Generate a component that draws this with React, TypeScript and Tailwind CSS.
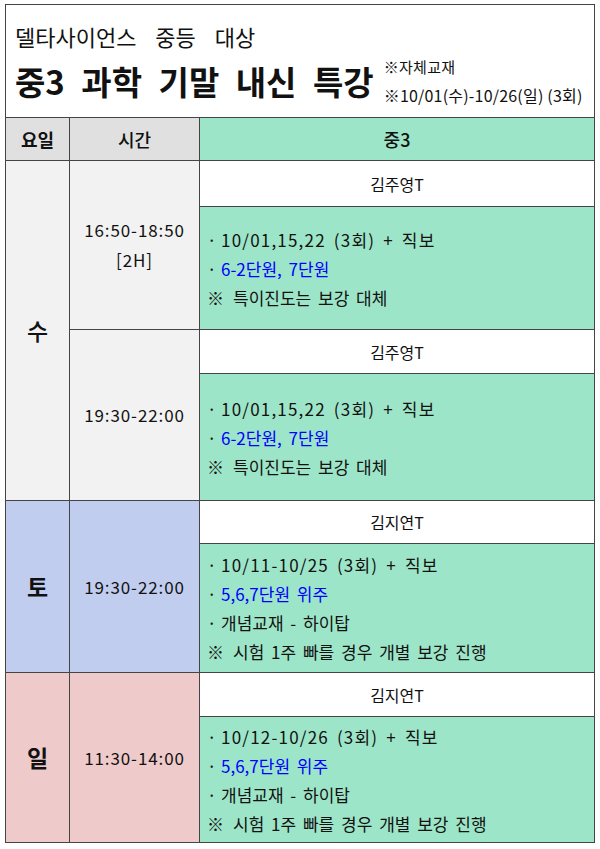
import React from "react";

// ─────────────────────────────────────────────
// Data
// ─────────────────────────────────────────────

type Line = { mark: string; text: string; blue?: boolean; wide?: boolean };

interface Slot {
  teacher:   string;
  time:      string[];
  lines:     Line[];
  headH:     string;
  bodyH:     string;
}

interface Day {
  label: string;
  bg:    string;
  slots: Slot[];
}

const wedLines: Line[] = [
  { mark: "·", text: "10/01,15,22 (3회) + 직보", wide: true },
  { mark: "·", text: "6-2단원, 7단원", blue: true },
  { mark: "※", text: "특이진도는 보강 대체" },
];

const days: Day[] = [
  {
    label: "수",
    bg:    "bg-[#f2f2f2]",
    slots: [
      {
        teacher: "김주영T",
        time:    ["16:50-18:50", "[2H]"],
        headH:   "h-[46px]",
        bodyH:   "h-[123px]",
        lines:   wedLines,
      },
      {
        teacher: "김주영T",
        time:    ["19:30-22:00"],
        headH:   "h-[44px]",
        bodyH:   "h-[127px]",
        lines:   wedLines,
      },
    ],
  },
  {
    label: "토",
    bg:    "bg-[#c1cdef]",
    slots: [
      {
        teacher: "김지연T",
        time:    ["19:30-22:00"],
        headH:   "h-[43px]",
        bodyH:   "h-[129px]",
        lines: [
          { mark: "·", text: "10/11-10/25 (3회) + 직보", wide: true },
          { mark: "·", text: "5,6,7단원 위주", blue: true },
          { mark: "·", text: "개념교재 - 하이탑" },
          { mark: "※", text: "시험 1주 빠를 경우 개별 보강 진행" },
        ],
      },
    ],
  },
  {
    label: "일",
    bg:    "bg-[#efcaca]",
    slots: [
      {
        teacher: "김지연T",
        time:    ["11:30-14:00"],
        headH:   "h-[44px]",
        bodyH:   "h-[126px]",
        lines: [
          { mark: "·", text: "10/12-10/26 (3회) + 직보", wide: true },
          { mark: "·", text: "5,6,7단원 위주", blue: true },
          { mark: "·", text: "개념교재 - 하이탑" },
          { mark: "※", text: "시험 1주 빠를 경우 개별 보강 진행" },
        ],
      },
    ],
  },
];

const cell = "border border-[#444]";

// ─────────────────────────────────────────────
// App
// ─────────────────────────────────────────────

export default function App() {
  return (
    <div
      className="w-[600px] h-[849px] bg-white pt-[4px] pl-[5px] text-[#111]"
      style={{ fontFamily: '"Noto Sans CJK KR", "Noto Sans", sans-serif' }}
    >
      {/* Title */}
      <div className="w-[590px] h-[113px] border-x border-t border-[#444] pl-[9px] pt-[12px]">
        <div className="text-[22px] leading-[38px] [word-spacing:14px]">델타사이언스 중등 대상</div>
        <div className="flex items-start">
          <span className="text-[33px] font-bold leading-[52px] [word-spacing:9px]">
            중3 과학 기말 내신 특강
          </span>
          <div className="ml-[10px] flex flex-col">
            <span className="text-[15px] leading-[24px] tracking-[0.3px]">※자체교재</span>
            <span className="text-[16px] leading-[32px] tracking-[0.2px]">※10/01(수)-10/26(일) (3회)</span>
          </div>
        </div>
      </div>

      {/* Timetable */}
      <table className="w-[590px] table-fixed border-collapse text-center">
        <colgroup>
          <col className="w-[64px]" />
          <col className="w-[130px]" />
          <col />
        </colgroup>
        <thead>
          <tr className="h-[43px] text-[18px]">
            <th className={`${cell} bg-[#e0e0e0] font-bold`}>요일</th>
            <th className={`${cell} bg-[#e0e0e0] font-medium`}>시간</th>
            <th className={`${cell} bg-[#9de5c8] font-medium`}>중3</th>
          </tr>
        </thead>
        <tbody>
          {days.map((d) =>
            d.slots.map((s, si) => (
              <React.Fragment key={d.label + si}>
                <tr className={s.headH}>
                  {si === 0 && (
                    <td
                      rowSpan={d.slots.length * 2}
                      className={`${cell} ${d.bg} text-[23px] ${d.label === "수" ? "font-medium" : "font-bold"}`}
                    >
                      {d.label}
                    </td>
                  )}
                  <td rowSpan={2} className={`${cell} ${d.bg} text-[17px] leading-[30px] tracking-[0.9px]`}>
                    {s.time.map((t) => (
                      <div key={t}>{t}</div>
                    ))}
                  </td>
                  <td className={`${cell} bg-white text-[16px]`}>{s.teacher}</td>
                </tr>
                <tr className={s.bodyH}>
                  <td className={`${cell} bg-[#9de5c8] text-left pl-[7px] text-[17px] leading-[29px] [word-spacing:3px]`}>
                    {s.lines.map((l) => (
                      <div key={l.text} className="flex">
                        <span className={l.mark === "·" ? "w-[14px]" : "w-[26px]"}>{l.mark}</span>
                        <span
                          className={`${l.blue ? "text-[#0000ff]" : ""} ${l.wide ? "tracking-[1.2px]" : ""}`}
                        >
                          {l.text}
                        </span>
                      </div>
                    ))}
                  </td>
                </tr>
              </React.Fragment>
            ))
          )}
        </tbody>
      </table>
    </div>
  );
}
